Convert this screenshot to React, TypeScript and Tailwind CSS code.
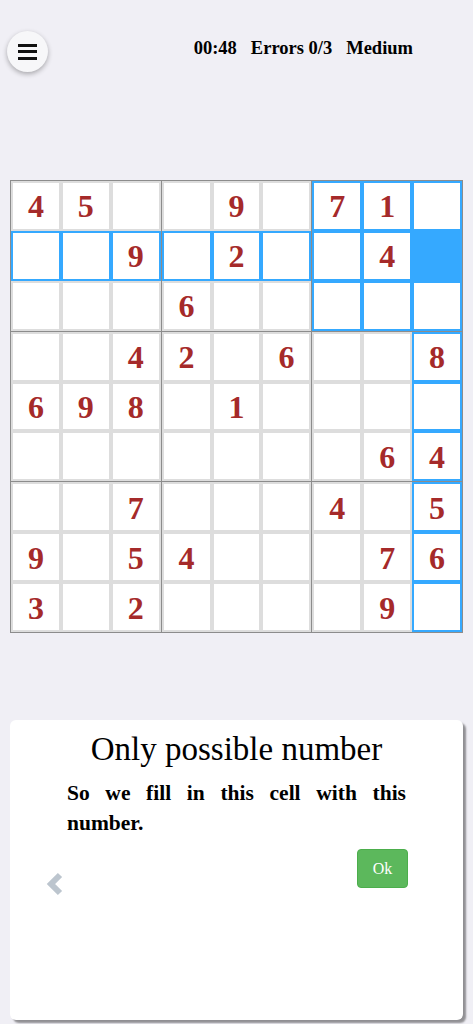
import { useState } from "react";

type Cell = number | null;

const PUZZLE: Cell[][] = [
  [4, 5, null, null, 9, null, 7, 1, null],
  [null, null, 9, null, 2, null, null, 4, null],
  [null, null, null, 6, null, null, null, null, null],
  [null, null, 4, 2, null, 6, null, null, 8],
  [6, 9, 8, null, 1, null, null, null, null],
  [null, null, null, null, null, null, null, 6, 4],
  [null, null, 7, null, null, null, 4, null, 5],
  [9, null, 5, 4, null, null, null, 7, 6],
  [3, null, 2, null, null, null, null, 9, null],
];

const serif = "font-['Liberation_Serif',serif]";

function MenuButton() {
  return (
    <button className="w-[41px] h-[41px] rounded-full bg-[#f7f7f9] shadow-[0_2px_5px_rgba(0,0,0,0.3)] flex flex-col items-center justify-center gap-[3.5px]">
      <span className="block w-[19px] h-[3px] bg-[#111]" />
      <span className="block w-[19px] h-[3px] bg-[#111]" />
      <span className="block w-[19px] h-[3px] bg-[#111]" />
    </button>
  );
}

function Board({ selRow, selCol }: { selRow: number; selCol: number }) {
  const selBox = Math.floor(selRow / 3) * 3 + Math.floor(selCol / 3);

  return (
    <div className="w-[453px] mx-auto bg-[#8c8c8c] p-px grid grid-cols-3 gap-px">
      {Array.from({ length: 9 }, (_, box) => {
        const br = Math.floor(box / 3) * 3;
        const bc = (box % 3) * 3;
        return (
          <div key={box} className="grid grid-cols-3">
            {Array.from({ length: 9 }, (_, i) => {
              const r = br + Math.floor(i / 3);
              const c = bc + (i % 3);
              const value = PUZZLE[r][c];
              const selected = r === selRow && c === selCol;
              const related = r === selRow || c === selCol || box === selBox;
              return (
                <div
                  key={i}
                  className={`h-[49.9px] border-2 flex items-center justify-center ${
                    related ? "border-[#35a9ff]" : "border-[#dddddd]"
                  } ${selected ? "bg-[#35a9ff]" : "bg-white"}`}
                >
                  {value && (
                    <span className={`${serif} font-bold text-[32px] leading-none text-[#a52a2a] pt-[1px]`}>
                      {value}
                    </span>
                  )}
                </div>
              );
            })}
          </div>
        );
      })}
    </div>
  );
}

function HintCard() {
  return (
    <div className={`${serif} mx-[10px] h-[300px] bg-white rounded-[6px] shadow-[3px_3px_2px_rgba(0,0,0,0.4)] pt-[9px]`}>
      <h2 className="text-center text-[33px] leading-[40px] text-black">Only possible number</h2>
      <p className="px-[57px] mt-[9px] text-[21.5px] leading-[30px] font-bold text-justify text-black">
        So we fill in this cell with this number.
      </p>
      <div className="flex items-start justify-between pl-[35px] pr-[55px] mt-[11px]">
        <svg width="19" height="24" viewBox="0 0 19 24" className="mt-[23px]">
          <polyline
            points="15,3 6,12 15,21"
            fill="none"
            stroke="#bcc5ce"
            strokeWidth="6"
            strokeLinejoin="miter"
          />
        </svg>
        <button className="w-[51px] h-[39px] rounded-[4px] bg-[#5cb85c] border border-[#4cae4c] text-white text-[16px]">
          Ok
        </button>
      </div>
    </div>
  );
}

export default function App() {
  const [sel] = useState({ row: 1, col: 8 });

  return (
    <div className="min-h-screen bg-[#f0eff5] pb-[4px]">
      <header className="flex items-start pt-[31px] pl-[7px] pr-[60px]">
        <MenuButton />
        <div className={`${serif} ml-auto mt-[6px] flex gap-[14px] font-bold text-[18.5px] leading-[22px] text-black`}>
          <span>00:48</span>
          <span>Errors 0/3</span>
          <span>Medium</span>
        </div>
      </header>

      <div className="mt-[108px]">
        <Board selRow={sel.row} selCol={sel.col} />
      </div>

      <div className="mt-[87px]">
        <HintCard />
      </div>
    </div>
  );
}
